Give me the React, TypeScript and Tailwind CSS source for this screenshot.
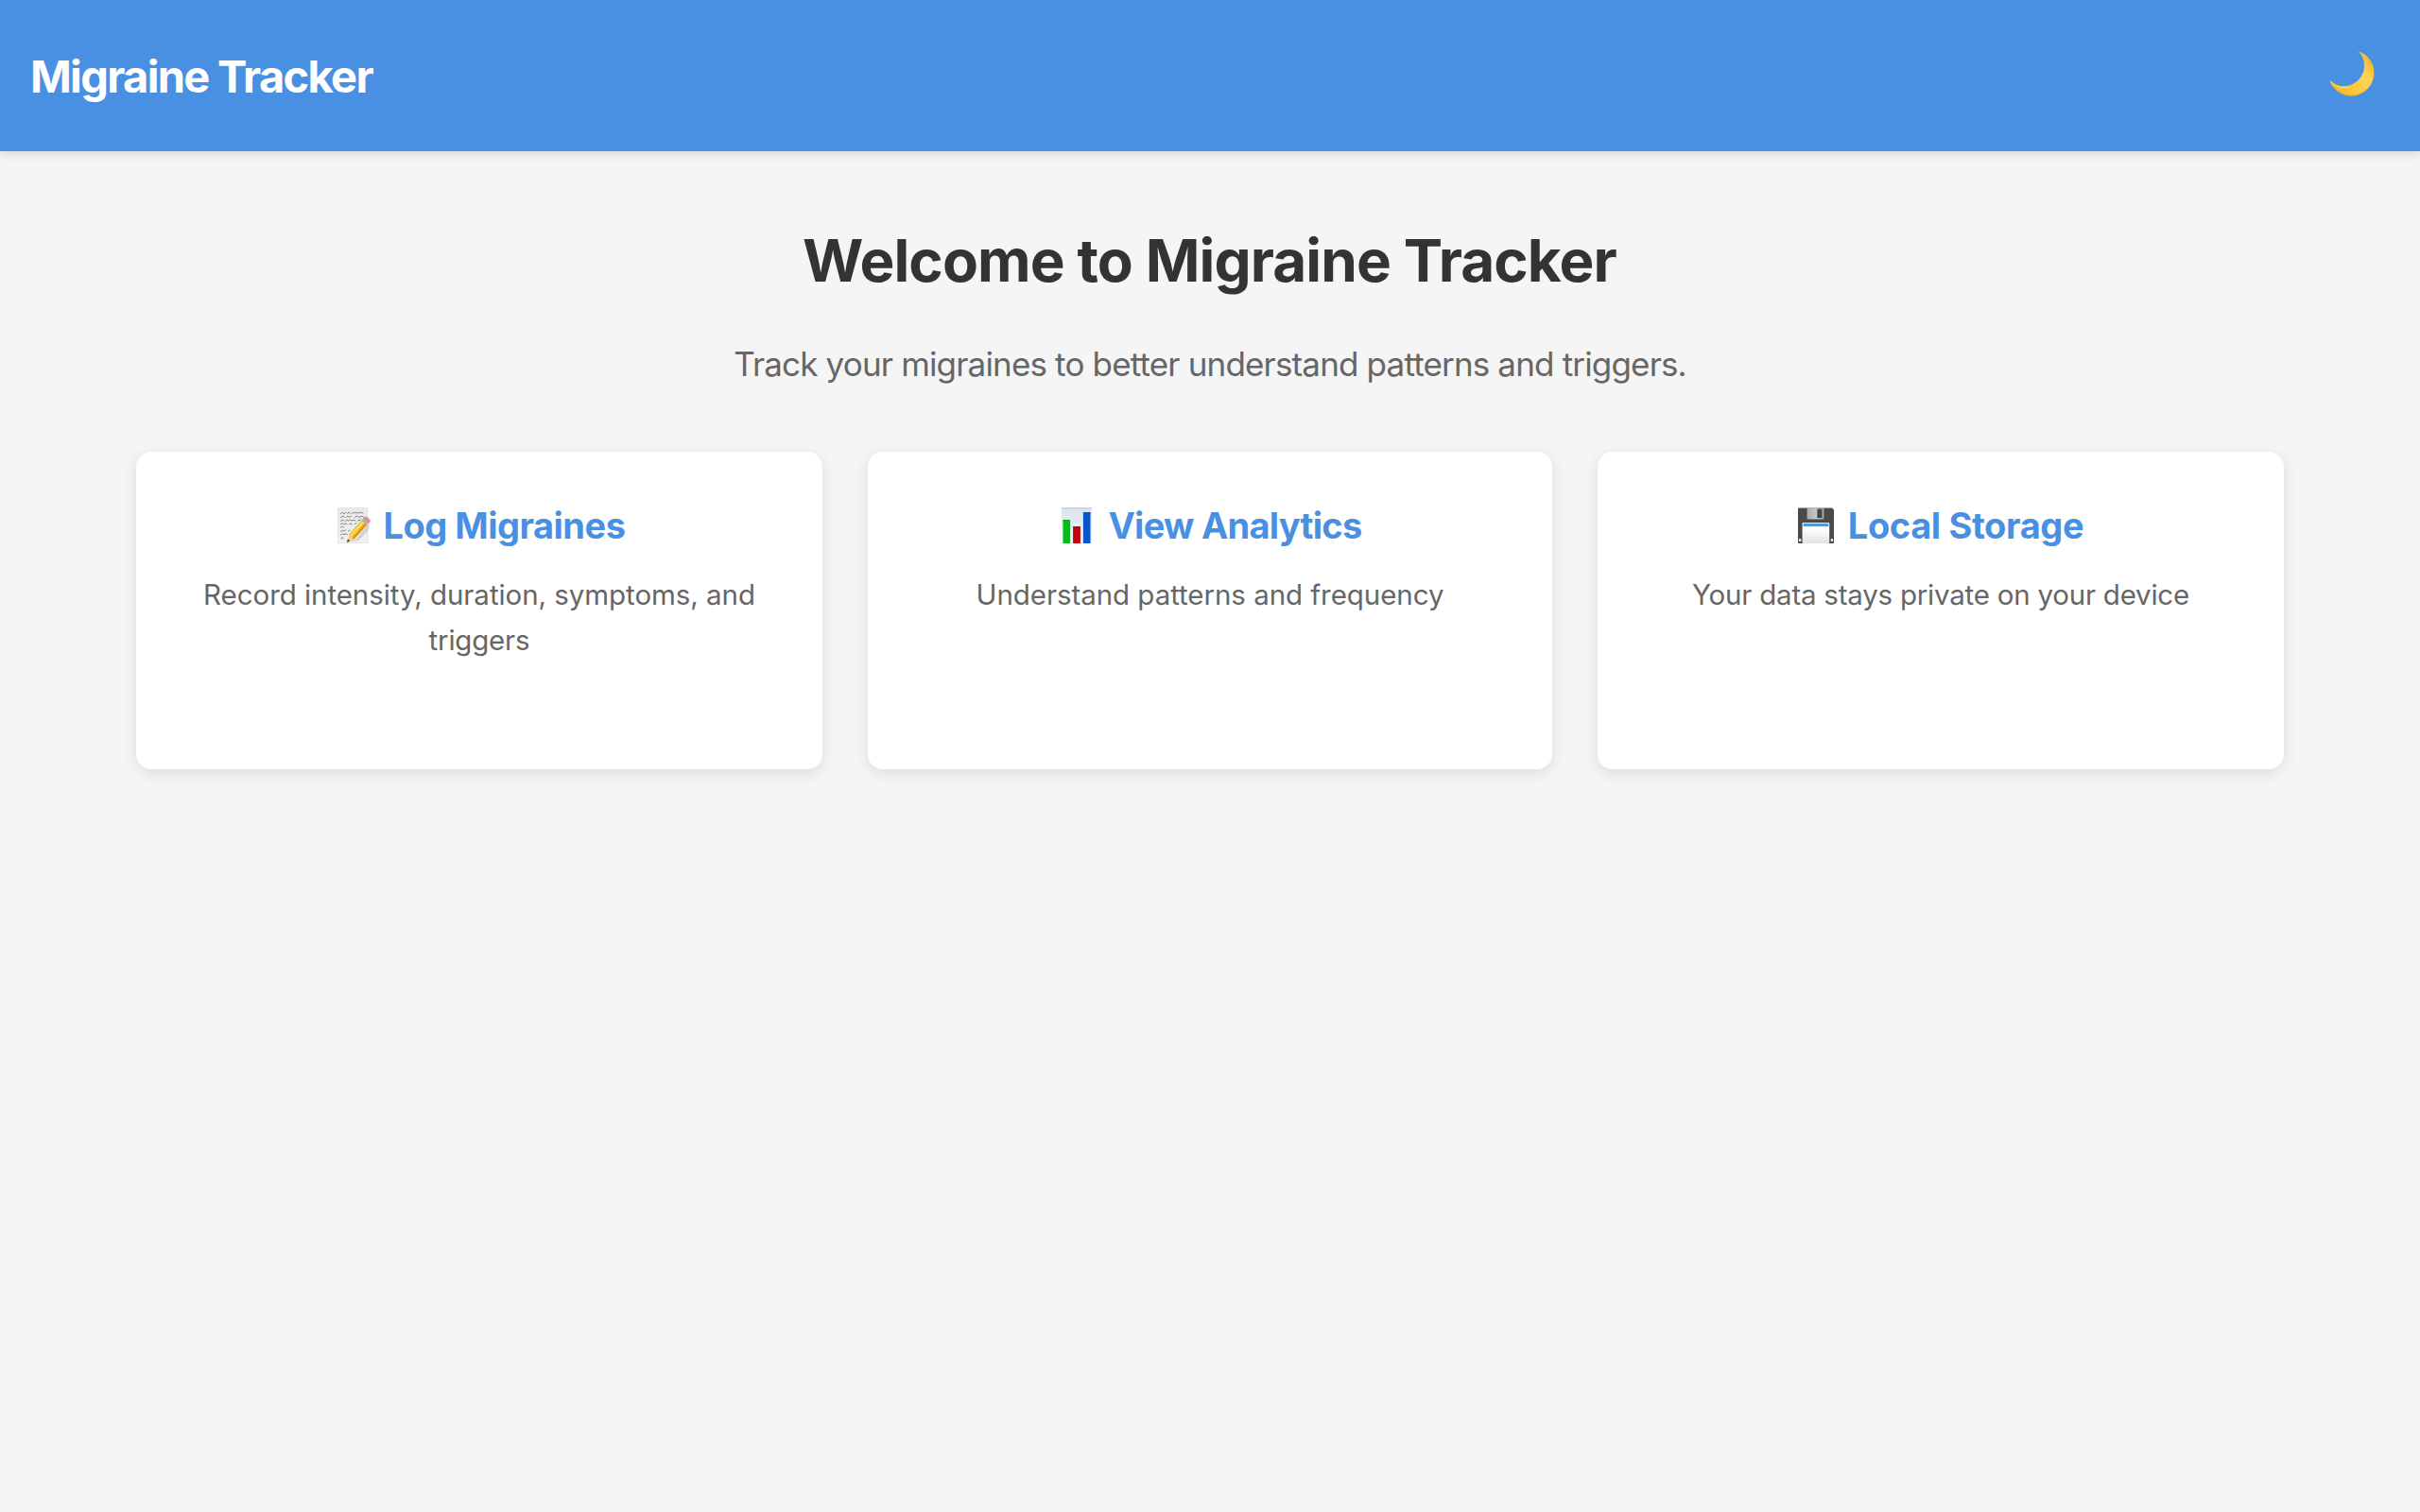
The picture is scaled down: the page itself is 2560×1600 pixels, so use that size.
import type { ReactNode } from "react";

function MoonIcon() {
  return (
    <svg width="48" height="48" viewBox="0 0 48 48" fill="none">
      <defs>
        <linearGradient id="moon" x1="10" y1="44" x2="46" y2="14" gradientUnits="userSpaceOnUse">
          <stop offset="0" stopColor="#f6b92b" />
          <stop offset="0.4" stopColor="#fccb3d" />
          <stop offset="0.7" stopColor="#fbd65a" />
          <stop offset="1" stopColor="#f0bb32" />
        </linearGradient>
      </defs>
      <path d="M30.8 0.2A24.2 24.2 0 1 1 0.2 30.7A21.5 21.5 0 1 0 30.8 0.2Z" fill="url(#moon)" />
      <path d="M1.6 32.4A21.7 21.7 0 0 0 22 38.4" stroke="#ffe25e" strokeWidth="1" />
      <path d="M4 36.5A23.7 23.7 0 0 0 47 27" stroke="#e3a322" strokeOpacity="0.45" strokeWidth="1" />
    </svg>
  );
}

function MemoIcon() {
  return (
    <svg className="mr-[13px] shrink-0" width="40" height="40" viewBox="-0.5 0 40 40" fill="none">
      <defs>
        <linearGradient id="paper" x1="0" y1="0" x2="0" y2="1">
          <stop offset="0" stopColor="#e9e9e9" />
          <stop offset="1" stopColor="#f1f1f1" />
        </linearGradient>
      </defs>
      <rect x="4.2" y="1.6" width="31.2" height="37" fill="url(#paper)" stroke="#dedede" strokeWidth="0.8" />
      <g stroke="#666" strokeWidth="0.8" strokeLinecap="round">
        <path d="M7 7.6l2-1.2 1 1.2 2-1M14 7.4l1.5-1.4 1 1.4M19 7.2l2-1 1 1 2-1 1.5 1 2-1 3 .8" />
        <path d="M7 11.4l2-1.3 2 1.2M13 11.3l1.5-1.3 1.5 1.3 2-1M22 11.3l2-1.4 2 1.4 3-1 2 .8" />
        <path d="M7 15.4l2-1.3 1 1.2M12 15.3l2-1.2 1 1.2 2-1.3 1.5 1.2 2-1 2 1M25 15l3-1" />
        <path d="M7 18.8l2-1 1 1 2-1 1.5 1M16 18.8l1.5-1 1.5 1M22 18.4l1.5-.8" />
        <path d="M7 22.2l1.5-1 1.5 1" />
        <path d="M7 26.4l2-1.4 1 1.2 2-1.2M15 26.2l1.5-1" />
        <path d="M7 30l2-1.3 1.5 1.2 2-1.2 1.5 1M7 34l1.5-1.4 1.5 1.2" />
      </g>
      <path d="M15 37.5l8-3L38 16l-1 8-11 12z" fill="#000" fillOpacity="0.12" />
      <path d="M13.4 37.8l2.4-8 5.6 4.9z" fill="#f1cf96" />
      <path d="M13.4 37.8l1-3.4 2.4 2.1z" fill="#3a3a3a" />
      <path d="M15.4 29.8L28.8 14.7l5.6 4.9-13.4 15z" fill="#f8bd1d" />
      <path d="M16.4 30.6L29.6 15.8l1.7 1.5-13.1 14.7z" fill="#ffdc5a" />
      <path d="M19.4 33.4L32.8 18.3l1.6 1.3-13.4 15z" fill="#d68c12" />
      <path d="M28.8 14.7l2-2.2 5.6 4.9-2 2.2z" fill="#a9b3bd" />
      <path d="M30.8 12.5l.9-.9c.9-.9 2.9-.5 4.6.9 1.7 1.4 2.1 3.1 1.2 4l-1.1 1z" fill="#f08b93" stroke="#d96f79" strokeWidth="0.4" />
    </svg>
  );
}

function ChartIcon() {
  return (
    <svg className="mr-[13px] shrink-0" width="40" height="40" viewBox="-0.5 0 40 40" fill="none">
      <defs>
        <linearGradient id="board" x1="0" y1="0" x2="0" y2="1">
          <stop offset="0" stopColor="#d5dde6" />
          <stop offset="0.1" stopColor="#dde5ee" />
          <stop offset="1" stopColor="#eef2f6" />
        </linearGradient>
      </defs>
      <rect x="3.3" y="1.2" width="32" height="37.8" fill="url(#board)" />
      <path d="M3.3 1.7h32" stroke="#c5cdd6" strokeWidth="1" />
      <rect x="5" y="14.2" width="7.6" height="24.8" fill="#00bd18" />
      <rect x="15.6" y="21.2" width="7.8" height="17.8" fill="#c00408" />
      <rect x="26.4" y="6.2" width="7.6" height="32.8" fill="#0756c4" />
      <path d="M5 14.6h7.6" stroke="#0b9a1c" strokeWidth="0.8" />
      <path d="M15.6 21.6h7.8" stroke="#960306" strokeWidth="0.8" />
      <path d="M26.4 6.6H34" stroke="#0a3f92" strokeWidth="0.8" />
    </svg>
  );
}

function FloppyIcon() {
  return (
    <svg className="mr-[13px] shrink-0 overflow-visible" width="40" height="40" viewBox="0 0 40 40" fill="none">
      <defs>
        <linearGradient id="label" x1="0" y1="0" x2="0" y2="1">
          <stop offset="0" stopColor="#ffffff" />
          <stop offset="0.4" stopColor="#fbfbfb" />
          <stop offset="1" stopColor="#e2e2e2" />
        </linearGradient>
        <linearGradient id="shutter" x1="0" y1="0" x2="1" y2="0">
          <stop offset="0" stopColor="#a9acae" />
          <stop offset="0.5" stopColor="#c3c5c7" />
          <stop offset="1" stopColor="#a2a5a7" />
        </linearGradient>
      </defs>
      <path d="M0 2.4q0-.8.8-.8H36l2 2V38.2q0 .8-.8.8H.8Q0 39 0 38.2z" fill="#4a4a4a" />
      <rect x="9.6" y="1.4" width="17.8" height="12.2" rx="0.8" fill="url(#shutter)" />
      <rect x="20.4" y="2.6" width="5" height="9.4" fill="#454545" />
      <rect x="4.6" y="17" width="28.6" height="22" rx="0.8" fill="url(#label)" />
      <rect x="5.6" y="17.8" width="26.6" height="3.2" fill="#5497d8" />
      <rect x="0.9" y="34.2" width="2.4" height="2.6" fill="#f5f5f5" />
      <rect x="34.7" y="34.2" width="2.4" height="2.6" fill="#f5f5f5" />
    </svg>
  );
}

function Card({ icon, title, children }: { icon: ReactNode; title: ReactNode; children: ReactNode }) {
  return (
    <section className="h-[336px] rounded-[16px] bg-white px-12 pt-[46px] text-center shadow-[0_4px_16px_rgba(0,0,0,0.1)]">
      <h3 className="flex h-16 items-center justify-center whitespace-nowrap text-[38px] leading-[64px] font-bold text-[#4a90e2]">
        {icon}
        {title}
      </h3>
      <p className="mt-[17px] text-[29.5px] leading-[48px] text-[#666666]">{children}</p>
    </section>
  );
}

export default function App() {
  return (
    <div className="min-h-screen bg-[#f5f5f5] font-['Inter',sans-serif] text-[#333333]">
      <header className="flex h-40 items-center justify-between bg-[#4a90e2] pr-12 pl-8 shadow-[0_4px_8px_rgba(0,0,0,0.1)]">
        <h1 className="pt-[2px] text-[47px] leading-[76px] font-bold tracking-[-1.672px] text-white">
          Migraine Tracker
        </h1>
        <button type="button" aria-label="Toggle dark mode" className="mb-[4px]">
          <MoonIcon />
        </button>
      </header>
      <main className="mx-auto w-[2272px] pt-[78px]">
        <h2 className="pr-px text-center text-[62px] leading-[76px] font-bold tracking-[-0.9px]">
          Welcome to Migraine Tracker
        </h2>
        <p className="mt-[43px] text-center text-[35px] leading-[56px] tracking-[-0.833px] text-[#666666]">
          Track your migraines to better understand patterns and triggers.
        </p>
        <div className="mt-[65px] grid grid-cols-[726px_724px_726px] gap-12">
          <Card icon={<MemoIcon />} title={<span className="tracking-[-0.5px]">Log Migraines</span>}>
            <span className="tracking-[-0.055px]">Record intensity, duration, symptoms, and</span>
            <br />
            <span className="tracking-[-0.2px]">triggers</span>
          </Card>
          <Card icon={<ChartIcon />} title={<span className="tracking-[-0.728px]">View Analytics</span>}>
            <span className="tracking-[-0.055px]">Understand patterns and frequency</span>
          </Card>
          <Card icon={<FloppyIcon />} title={<span className="tracking-[-0.37px]">Local Storage</span>}>
            <span className="tracking-[-0.23px]">Your data stays private on your device</span>
          </Card>
        </div>
      </main>
    </div>
  );
}
